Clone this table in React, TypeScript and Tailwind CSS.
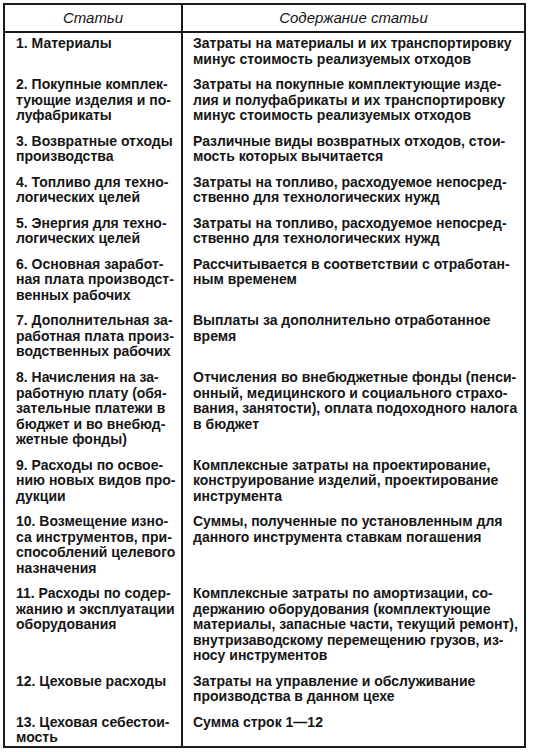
const rows: [string[], string[]][] = [
  [["1. Материалы"], ["Затраты на материалы и их транспортировку", "минус стоимость реализуемых отходов"]],
  [
    ["2. Покупные комплек-", "тующие изделия и по-", "луфабрикаты"],
    ["Затраты на покупные комплектующие изде-", "лия и полуфабрикаты и их транспортировку", "минус стоимость реализуемых отходов"],
  ],
  [["3. Возвратные отходы", "производства"], ["Различные виды возвратных отходов, стои-", "мость которых вычитается"]],
  [["4. Топливо для техно-", "логических целей"], ["Затраты на топливо, расходуемое непосред-", "ственно для технологических нужд"]],
  [["5. Энергия для техно-", "логических целей"], ["Затраты на топливо, расходуемое непосред-", "ственно для технологических нужд"]],
  [
    ["6. Основная заработ-", "ная плата производст-", "венных рабочих"],
    ["Рассчитывается в соответствии с отработан-", "ным временем"],
  ],
  [
    ["7. Дополнительная за-", "работная плата произ-", "водственных рабочих"],
    ["Выплаты за дополнительно отработанное", "время"],
  ],
  [
    ["8. Начисления на за-", "работную плату (обя-", "зательные платежи в", "бюджет и во внебюд-", "жетные фонды)"],
    [
      "Отчисления во внебюджетные фонды (пенси-",
      "онный, медицинского и социального страхо-",
      "вания, занятости), оплата подоходного налога",
      "в бюджет",
    ],
  ],
  [
    ["9. Расходы по освое-", "нию новых видов про-", "дукции"],
    ["Комплексные затраты на проектирование,", "конструирование изделий, проектирование", "инструмента"],
  ],
  [
    ["10. Возмещение изно-", "са инструментов, при-", "способлений целевого", "назначения"],
    ["Суммы, полученные по установленным для", "данного инструмента ставкам погашения"],
  ],
  [
    ["11. Расходы по содер-", "жанию и эксплуатации", "оборудования"],
    [
      "Комплексные затраты по амортизации, со-",
      "держанию оборудования (комплектующие",
      "материалы, запасные части, текущий ремонт),",
      "внутризаводскому перемещению грузов, из-",
      "носу инструментов",
    ],
  ],
  [["12. Цеховые расходы"], ["Затраты на управление и обслуживание", "производства в данном цехе"]],
  [["13. Цеховая себестои-", "мость"], ["Сумма строк 1—12"]],
];

function Lines({ lines }: { lines: string[] }) {
  return (
    <>
      {lines.map((l, i) => (
        <div key={i} className="whitespace-nowrap">
          {l}
        </div>
      ))}
    </>
  );
}

export default function App() {
  return (
    <div
      className="w-[533px] h-[752px] bg-white pt-[3px] pl-[3px] text-[#161616]"
      style={{ fontFamily: '"Liberation Sans", Arial, sans-serif' }}
    >
      <div className="w-[523px] h-[745px] border-2 border-[#1a1a1a] flex flex-col">
        {/* header */}
        <div className="grid grid-cols-[178px_1fr] h-[28px] shrink-0 border-b-2 border-[#1a1a1a] italic text-[15px]">
          <div className="border-r-2 border-[#1a1a1a] flex items-center justify-center">Статьи</div>
          <div className="flex items-center justify-center">Содержание статьи</div>
        </div>

        {/* body: space sits above each row */}
        <div className="flex-1 grid grid-cols-[178px_1fr] text-[14px] leading-[15.5px] font-bold">
          {rows.map(([left, right], i) => (
            <div key={i} className="contents">
              <div className={`border-r-2 border-[#1a1a1a] pl-[11px] ${i === 0 ? "pt-[3px]" : "pt-[10px]"}`}>
                <Lines lines={left} />
              </div>
              <div className={`pl-[10px] ${i === 0 ? "pt-[3px]" : "pt-[10px]"}`}>
                <Lines lines={right} />
              </div>
            </div>
          ))}
        </div>
      </div>
    </div>
  );
}
